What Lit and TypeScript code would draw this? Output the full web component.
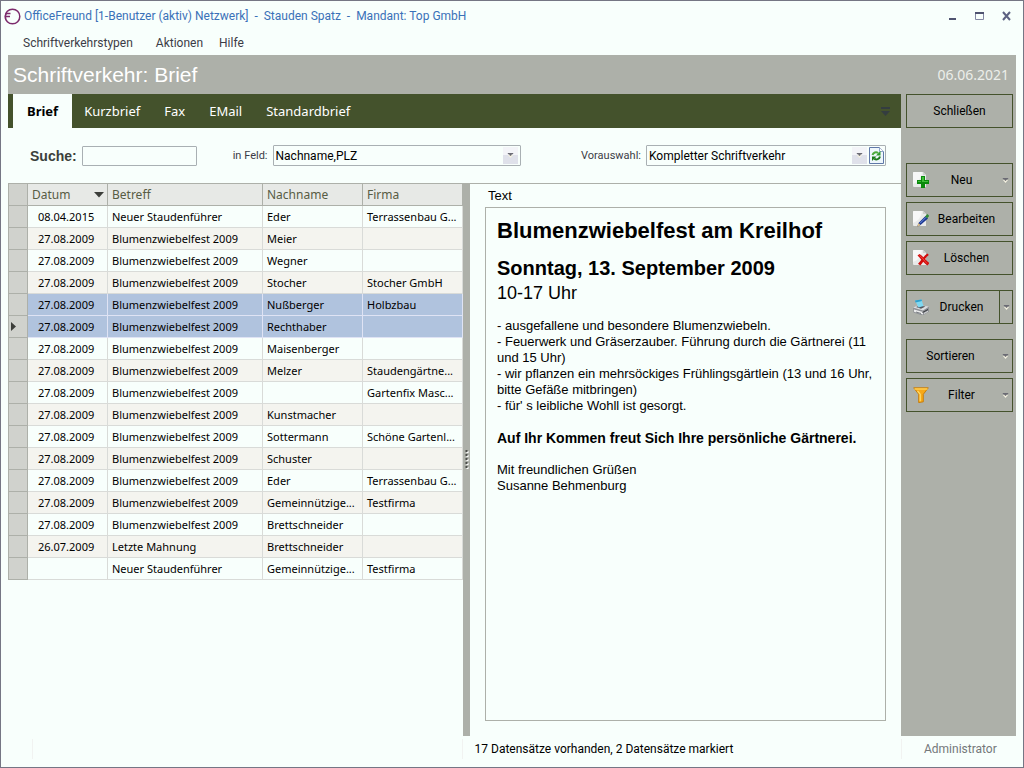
import { LitElement, html, css, svg, nothing } from "lit";
import { customElement, property, state } from "lit/decorators.js";

type Row = [string, string, string, string];

const ROWS: Row[] = [
  ["08.04.2015", "Neuer Staudenführer", "Eder", "Terrassenbau G..."],
  ["27.08.2009", "Blumenzwiebelfest 2009", "Meier", ""],
  ["27.08.2009", "Blumenzwiebelfest 2009", "Wegner", ""],
  ["27.08.2009", "Blumenzwiebelfest 2009", "Stocher", "Stocher GmbH"],
  ["27.08.2009", "Blumenzwiebelfest 2009", "Nußberger", "Holbzbau"],
  ["27.08.2009", "Blumenzwiebelfest 2009", "Rechthaber", ""],
  ["27.08.2009", "Blumenzwiebelfest 2009", "Maisenberger", ""],
  ["27.08.2009", "Blumenzwiebelfest 2009", "Melzer", "Staudengärtne..."],
  ["27.08.2009", "Blumenzwiebelfest 2009", "", "Gartenfix Masc..."],
  ["27.08.2009", "Blumenzwiebelfest 2009", "Kunstmacher", ""],
  ["27.08.2009", "Blumenzwiebelfest 2009", "Sottermann", "Schöne Gartenl..."],
  ["27.08.2009", "Blumenzwiebelfest 2009", "Schuster", ""],
  ["27.08.2009", "Blumenzwiebelfest 2009", "Eder", "Terrassenbau G..."],
  ["27.08.2009", "Blumenzwiebelfest 2009", "Gemeinnützige...", "Testfirma"],
  ["27.08.2009", "Blumenzwiebelfest 2009", "Brettschneider", ""],
  ["26.07.2009", "Letzte Mahnung", "Brettschneider", ""],
  ["", "Neuer Staudenführer", "Gemeinnützige...", "Testfirma"],
];

const sheet = svg`<path d="M0 1q0-1 1-1h9l3 3v12h-12q-1 0-1-1z" fill="#e9eae9"/><path d="M0 1q0-1 1-1h8q-1 9-9 12z" fill="#f7f7f7"/><path d="M10 0v3h3z" fill="#cfd1ce"/>`;

const ICONS: Record<string, unknown> = {
  neu: svg`${sheet}<path d="M8 4h4v4h4v4h-4v4h-4v-4h-4v-4h4z" fill="#0a8a0c"/><path d="M9 5h2v4h4v1h-6zM5 9h3v1h-3z" fill="#3fbf3a"/>`,
  bearbeiten: svg`${sheet}<path d="M4 16l1.500-4 7-7 2.500 2.500-7.500 6.500z" fill="#1a3590"/><path d="M12 5.500l2.500-2.500 1.700 2-2.200 2.500z" fill="#2f8a35"/><path d="M4 16l1.500-4 2 2z" fill="#e0c080"/><path d="M7 12.300l6-6" stroke="#6c8fe0"/>`,
  loeschen: svg`${sheet}<path d="M4.500 5.500l2-1.500c1.500.8 2.700 1.900 3.900 3.200 1.100-1.500 2.400-2.700 4.100-3.700l1.300 1.600c-1.500 1-2.700 2.300-3.700 4 1.300 1.500 2.500 2.800 4.200 3.900l-1.800 2.500c-1.700-1-3-2.300-4.300-3.700-.9 1.400-1.800 2.600-2.900 3.700l-2.300-1.800c1.300-1.200 2.300-2.500 3.300-4-1.200-1.500-2.300-3-3.800-4.200z" fill="#d30c0c"/><path d="M6.500 5.500c2.500 1.500 5 5.500 7.500 8" fill="none" stroke="#ef4a42"/>`,
  drucken: svg`<path d="M0 8.500l5.500-2.500 10.500 1.500v5l-6.500 4-9-3z" fill="#8e9196"/><path d="M0 8.500l5.500-2.500 10.500 1.500-6 4z" fill="#dcdee0"/><path d="M1 10.500l9 2.500v2.500l-9-2.700z" fill="#eceded"/><path d="M3 8l3.500-1.500 6 1-4.500 2.300z" fill="#55585e"/><path d="M2 1.500l6.500-1 2 6.500-5 1.500z" fill="#7fd9f2"/><path d="M2 1.500l6.500-1 .5 1.600-6.500 1.300z" fill="#2f9fcb"/><path d="M3 13l5 1.500" stroke="#777b80"/><path d="M9.500 13.500l5.500-3" stroke="#34373c"/><path d="M11 14.500l4-2.200" stroke="#d6d8da"/>`,
  filter: svg`<path d="M.7 .8h14.600l-5 6.500v7.500l-4.600 .8v-8.300z" fill="#f7a817" stroke="#c67905" stroke-width=".9"/><path d="M1.500 2h13" stroke="#ffce52" stroke-width="1.500"/><path d="M4.500 4l2.700 3.200v7" fill="none" stroke="#ffdc6a" stroke-width="1.300"/>`,
};

const arrow = html`<svg class="arrow" width="7" height="5" viewBox="0 0 7 5" aria-hidden="true"><path d="M1 2h5l-2.500 3z" fill="#f6f3e2"/><path d="M1 0h5v1h-1l-1.500 2-1.500-2h-1z" fill="#6c6c74" stroke="#6c6c74" stroke-width=".4"/></svg>`;

/* Button of the right-hand action bar */
@customElement("side-button")
export class SideButton extends LitElement {
  @property() icon = "";
  @property() label = "";
  @property({ type: Boolean }) menu = false;
  @property({ type: Boolean }) split = false;

  static styles = css`
    :host {
      display: flex;
      height: 34px;
    }
    button {
      display: flex;
      align-items: center;
      box-sizing: border-box;
      padding: 0;
      border: 1px solid #44522c;
      background: transparent;
      color: #000;
      font: 12px/16px Roboto, "Noto Sans", sans-serif;
    }
    button:hover {
      background: #bdc0b9;
    }
    .main {
      flex: 1;
      min-width: 0;
    }
    .icon {
      flex: none;
      margin-left: 6px;
    }
    .label {
      flex: 1;
      text-align: center;
    }
    .with-icon {
      padding-right: 8px;
    }
    .with-menu {
      padding-right: 3px;
    }
    .with-menu .label {
      padding-right: 8px;
    }
    .drop {
      width: 13px;
      justify-content: center;
      border-left: 0;
    }
    .with-split {
      padding-right: 5px;
    }
  `;

  render() {
    const kind = this.menu ? "with-menu" : this.split ? "with-split" : this.icon ? "with-icon" : "";
    return html`<button class="main ${kind}">
        ${this.icon
          ? html`<svg class="icon" width="16" height="16" viewBox="0 0 16 16" aria-hidden="true">${ICONS[this.icon]}</svg>`
          : nothing}
        <span class="label">${this.label}</span>
        ${this.menu ? arrow : nothing}
      </button>
      ${this.split ? html`<button class="drop" aria-label="${this.label}: Optionen">${arrow}</button>` : nothing}`;
  }
}

@customElement("app-root")
export class AppRoot extends LitElement {
  @state() private tab = "Brief";
  @state() private marked = new Set([4, 5]);
  @state() private current = 5;

  static styles = css`
    :host {
      display: flex;
      flex-direction: column;
      box-sizing: border-box;
      min-height: 100vh;
      padding: 0 7px;
      border: 1px solid #757684;
      background: #f8fffc;
      color: #000;
      font: 12px/16px Roboto, "Noto Sans", sans-serif;
    }
    .titlebar {
      display: flex;
      align-items: center;
      height: 30px;
      margin-left: -4px;
      color: #3a71b8;
      white-space: pre;
    }
    .titlebar .name {
      flex: 1;
      margin: 0;
      font: inherit;
      padding-left: 3px;
    }
    .win {
      display: flex;
      gap: 11px;
      padding-right: 1px;
    }
    .win button {
      display: flex;
      padding: 2px;
      border: 0;
      background: none;
    }
    .menubar {
      display: flex;
      gap: 23px;
      height: 24px;
      align-items: center;
      padding-left: 15px;
    }
    .menubar button {
      padding: 0;
      border: 0;
      background: none;
      color: #3c3c46;
      font: inherit;
    }
    .menubar button:last-child {
      margin-left: -7px;
    }
    .header {
      display: flex;
      align-items: center;
      justify-content: space-between;
      height: 39px;
      padding: 0 7px 0 5px;
      background: #adb0a9;
      color: #fff;
    }
    .header h2 {
      margin: 0;
      font: 21px/24px "Liberation Sans", Arial, sans-serif;
    }
    .header time {
      color: #eceeea;
      font: 14px/18px "Noto Sans", "Open Sans", sans-serif;
    }
    .body {
      display: flex;
      flex: 1;
    }
    .work {
      display: flex;
      flex-direction: column;
      flex: 1;
      min-width: 0;
    }
    .tabs {
      display: flex;
      align-items: stretch;
      height: 34px;
      padding: 0 11px 0 5px;
      background: #44522c;
    }
    .tab {
      padding: 0 12px;
      border: 0;
      background: none;
      color: #fff;
      font: 13px/18px "Noto Sans", "Open Sans", sans-serif;
    }
    .tab.active {
      padding: 0 14px;
      background: #f8fffc;
      color: #000;
      font-weight: 700;
    }
    .more {
      align-self: center;
      display: flex;
      margin-left: auto;
      padding: 0;
      border: 0;
      background: none;
    }
    .filters {
      display: flex;
      align-items: center;
      height: 55px;
      padding: 0 15px 0 22px;
      color: #3c3c46;
    }
    .search-label {
      font: bold 14px/18px "Liberation Sans", Arial, sans-serif;
      color: #3b3f3b;
      margin-right: 5px;
    }
    .search {
      box-sizing: border-box;
      width: 115px;
      height: 20px;
      border: 1px solid #a9b0b3;
      border-radius: 1px;
      background: #f8fffc;
      padding: 0 3px;
      font: inherit;
    }
    .field-label {
      margin: 0 5px 0 36px;
      font-size: 11px;
    }
    .field-label.right {
      margin-left: auto;
    }
    .combo {
      display: flex;
      align-items: center;
      box-sizing: border-box;
      width: 248px;
      height: 21px;
      border: 1px solid #a9b0b3;
      border-radius: 1px;
      padding: 0 2px;
    }
    .combo.narrow {
      width: 240px;
      padding-right: 1px;
    }
    .combo select {
      appearance: none;
      flex: 1;
      min-width: 0;
      height: 18px;
      padding: 0;
      border: 0;
      outline: 0;
      background: none;
      color: #000;
      font: 12px/16px Roboto, "Noto Sans", sans-serif;
    }
    .knob {
      display: flex;
      align-items: center;
      justify-content: center;
      width: 15px;
      height: 17px;
      background: linear-gradient(#f3f4f8 48%, #dfe1ea 50%);
      pointer-events: none;
    }
    .refresh {
      display: flex;
      margin-left: 2px;
      padding: 0;
      border: 0;
      background: none;
    }
    .panes {
      display: grid;
      grid-template-columns: minmax(0, 455fr) 7px minmax(0, 431fr);
      flex: 1;
      border-top: 1px solid #adb0a9;
    }
    .list {
      width: 100%;
      table-layout: fixed;
      border-collapse: separate;
      border-spacing: 0;
      font-family: "Noto Sans", "Open Sans", sans-serif;
    }
    .list th,
    .list td {
      box-sizing: border-box;
      height: 22px;
      padding: 0 3px 0 4px;
      border-right: 1px solid #d9dbd8;
      border-bottom: 1px solid #d9dbd8;
      overflow: hidden;
      text-align: left;
      text-overflow: ellipsis;
      white-space: nowrap;
      font-size: 11px;
      font-weight: 400;
      line-height: 16px;
    }
    .list thead th {
      border-color: #adb0a9;
      background: #e7e9e6;
      color: #575c44;
      font-size: 12px;
    }
    .list .handle,
    .list thead .handle {
      padding: 0 0 0 2px;
      border-color: #adb0a9;
      border-left: 1px solid #adb0a9;
      background: #d0d2cd;
    }
    .list .date {
      padding-left: 10px;
    }
    .c-handle {
      width: 20px;
    }
    .c-date {
      width: 80px;
    }
    .c-subject {
      width: 155px;
    }
    .c-name {
      width: 100px;
    }
    .sort {
      display: flex;
      align-items: center;
      justify-content: space-between;
    }
    tbody tr:nth-child(even) {
      background: #f4f4ef;
    }
    tbody tr.marked {
      background: #b0c3de;
    }
    tbody tr.marked td {
      border-color: #dfe3f4;
    }
    tbody tr.marked td.handle {
      border-color: #adb0a9;
    }
    .marker {
      display: block;
    }
    .splitter {
      display: flex;
      align-items: center;
      justify-content: center;
      background: #adb0a9;
    }
    .preview {
      display: flex;
      flex-direction: column;
      padding: 4px 15px 15px;
    }
    .preview h3 {
      margin: 0 3px 3px;
      font: 13px/16px "Liberation Sans", Arial, sans-serif;
    }
    .paper {
      flex: 1;
      padding: 9px 11px;
      border: 1px solid #adb0a9;
      font: 13px/16px "Liberation Sans", Arial, sans-serif;
    }
    .paper h4 {
      margin: 0 0 11px;
      font-size: 22px;
      line-height: 28px;
    }
    .paper h5 {
      margin: 0;
      font-size: 20px;
      line-height: 24px;
    }
    .paper p {
      margin: 0 0 16px;
    }
    .paper .hours {
      margin-bottom: 12px;
      font-size: 18px;
      line-height: 26px;
    }
    .paper .closing {
      font-size: 14px;
      font-weight: 700;
    }
    .side {
      display: flex;
      flex-direction: column;
      gap: 5px;
      flex: none;
      box-sizing: border-box;
      width: 115px;
      padding: 0 3px 0 5px;
      background: #adb0a9;
    }
    .group {
      margin-top: 10px;
    }
    .group.first {
      margin-top: 30px;
    }
    .status {
      display: grid;
      grid-template-columns: minmax(0, 450fr) minmax(0, 436fr) 115px;
      align-items: center;
      height: 31px;
      padding-bottom: 5px;
      box-sizing: border-box;
    }
    .status .count {
      padding-left: 12px;
    }
    .status .user {
      padding-left: 22px;
      color: #74787a;
    }
    .status span {
      border-left: 1px solid #f1f3f1;
      line-height: 20px;
    }
    .status .blank {
      height: 20px;
      margin-left: 24px;
    }
  `;

  private pick(i: number) {
    this.current = i;
    this.marked = new Set([i]);
  }

  render() {
    const tabs = ["Brief", "Kurzbrief", "Fax", "EMail", "Standardbrief"];
    return html`
      <div class="titlebar">
        <svg width="17" height="17" viewBox="0 0 17 17" aria-hidden="true">
          <circle cx="8.500" cy="8.500" r="7.300" fill="none" stroke="#7c2a6c" stroke-width="1.500" />
          <path d="M6.500 5.500H3c-1 0-1.500 1-1.500 2.500V11M1.500 8.500h4.500" fill="none" stroke="#7c2a6c" stroke-width="1.300" />
        </svg>
        <h1 class="name">OfficeFreund [1-Benutzer (aktiv) Netzwerk]  -  Stauden Spatz  -  Mandant: Top GmbH</h1>
        <div class="win">
          <button aria-label="Minimieren"><svg width="12" height="12"><path d="M2 9h7" stroke="#4f5370" stroke-width="2" /></svg></button>
          <button aria-label="Maximieren"><svg width="12" height="12"><path d="M1.500 3v6.500h8V3" fill="none" stroke="#8488a4" /><path d="M1 3h9" stroke="#4f5370" stroke-width="2" /></svg></button>
          <button aria-label="Fenster schließen"><svg width="12" height="12"><path d="M2 2l7 8M9 2l-7 8" stroke="#5d6282" stroke-width="2" /></svg></button>
        </div>
      </div>
      <nav class="menubar">
        <button>Schriftverkehrstypen</button>
        <button>Aktionen</button>
        <button>Hilfe</button>
      </nav>
      <header class="header">
        <h2>Schriftverkehr: Brief</h2>
        <time datetime="2021-06-06">06.06.2021</time>
      </header>
      <div class="body">
        <main class="work">
          <div class="tabs" role="tablist">
            ${tabs.map(
              (t) => html`<button role="tab" class="tab ${t === this.tab ? "active" : ""}" aria-selected=${t === this.tab} @click=${() => (this.tab = t)}>${t}</button>`
            )}
            <button class="more" aria-label="Weitere Reiter">
              <svg width="9" height="9"><path d="M0 1h9" stroke="#343d40" stroke-width="2" /><path d="M0 4h9l-4.500 5z" fill="#343d40" /></svg>
            </button>
          </div>
          <div class="filters">
            <label class="search-label" for="q">Suche:</label>
            <input class="search" id="q" type="text" />
            <label class="field-label" for="field">in Feld:</label>
            <div class="combo">
              <select id="field"><option>Nachname,PLZ</option></select>
              <span class="knob">${arrow}</span>
            </div>
            <label class="field-label right" for="preset">Vorauswahl:</label>
            <div class="combo narrow">
              <select id="preset"><option>Kompletter Schriftverkehr</option></select>
              <span class="knob">${arrow}</span>
              <button class="refresh" aria-label="Aktualisieren">
                <svg width="15" height="17" viewBox="0 0 15 17">
                  <path d="M.5 .5h10l4 4v12h-14z" fill="#eef7fc" stroke="#5f78a8" />
                  <path d="M10.500 .5v4h4" fill="#fff" stroke="#8fa4c8" />
                  <path d="M3.500 8c.7-2.500 3.500-3.500 5.700-2" fill="none" stroke="#4cab3c" stroke-width="2" />
                  <path d="M11.500 4v4.500h-4.500z" fill="#2f9a2a" />
                  <path d="M11 9.500c-.7 2.700-3.500 3.700-5.700 2.200" fill="none" stroke="#1d7a1c" stroke-width="2" />
                  <path d="M3 14v-4.500h4.500z" fill="#1d7a1c" />
                </svg>
              </button>
            </div>
          </div>
          <div class="panes">
            <div>
              <table class="list">
                <colgroup>
                  <col class="c-handle" /><col class="c-date" /><col class="c-subject" /><col class="c-name" /><col />
                </colgroup>
                <thead>
                  <tr>
                    <th class="handle"></th>
                    <th><span class="sort">Datum<svg width="10" height="6"><path d="M0 0h10l-5 5.500z" fill="#3c3e3a" /></svg></span></th>
                    <th>Betreff</th>
                    <th>Nachname</th>
                    <th>Firma</th>
                  </tr>
                </thead>
                <tbody>
                  ${ROWS.map(
                    (r, i) => html`<tr class=${this.marked.has(i) ? "marked" : ""} @click=${() => this.pick(i)}>
                      <td class="handle">
                        ${i === this.current ? html`<svg class="marker" width="6" height="10"><path d="M0 0v9l5-4.500z" fill="#3c3e3a" /></svg>` : nothing}
                      </td>
                      <td class="date">${r[0]}</td>
                      <td>${r[1]}</td>
                      <td>${r[2]}</td>
                      <td>${r[3]}</td>
                    </tr>`
                  )}
                </tbody>
              </table>
            </div>
            <div class="splitter" role="separator" aria-orientation="vertical">
              <svg width="4" height="20"><path d="M2.500 1v19" stroke="#fff" stroke-width="2" stroke-dasharray="2 2" /><path d="M1.500 0v20" stroke="#4a4c48" stroke-width="2" stroke-dasharray="2 2" /></svg>
            </div>
            <section class="preview">
              <h3>Text</h3>
              <article class="paper">
                <h4>Blumenzwiebelfest am Kreilhof</h4>
                <h5>Sonntag, 13. September 2009</h5>
                <p class="hours">10-17 Uhr</p>
                <p>
                  - ausgefallene und besondere Blumenzwiebeln.<br />
                  - Feuerwerk und Gräserzauber. Führung durch die Gärtnerei (11 und 15 Uhr)<br />
                  - wir pflanzen ein mehrsöckiges Frühlingsgärtlein (13 und 16 Uhr, bitte Gefäße mitbringen)<br />
                  - für' s leibliche Wohll ist gesorgt.
                </p>
                <p class="closing">Auf Ihr Kommen freut Sich Ihre persönliche Gärtnerei.</p>
                <p>Mit freundlichen Grüßen<br />Susanne Behmenburg</p>
              </article>
            </section>
          </div>
        </main>
        <aside class="side">
          <side-button label="Schließen"></side-button>
          <side-button class="group first" icon="neu" label="Neu" menu></side-button>
          <side-button icon="bearbeiten" label="Bearbeiten"></side-button>
          <side-button icon="loeschen" label="Löschen"></side-button>
          <side-button class="group" icon="drucken" label="Drucken" split></side-button>
          <side-button class="group" label="Sortieren" menu></side-button>
          <side-button icon="filter" label="Filter" menu></side-button>
        </aside>
      </div>
      <footer class="status">
        <span class="blank"></span>
        <span class="count">17 Datensätze vorhanden, 2 Datensätze markiert</span>
        <span class="user">Administrator</span>
      </footer>
    `;
  }
}
